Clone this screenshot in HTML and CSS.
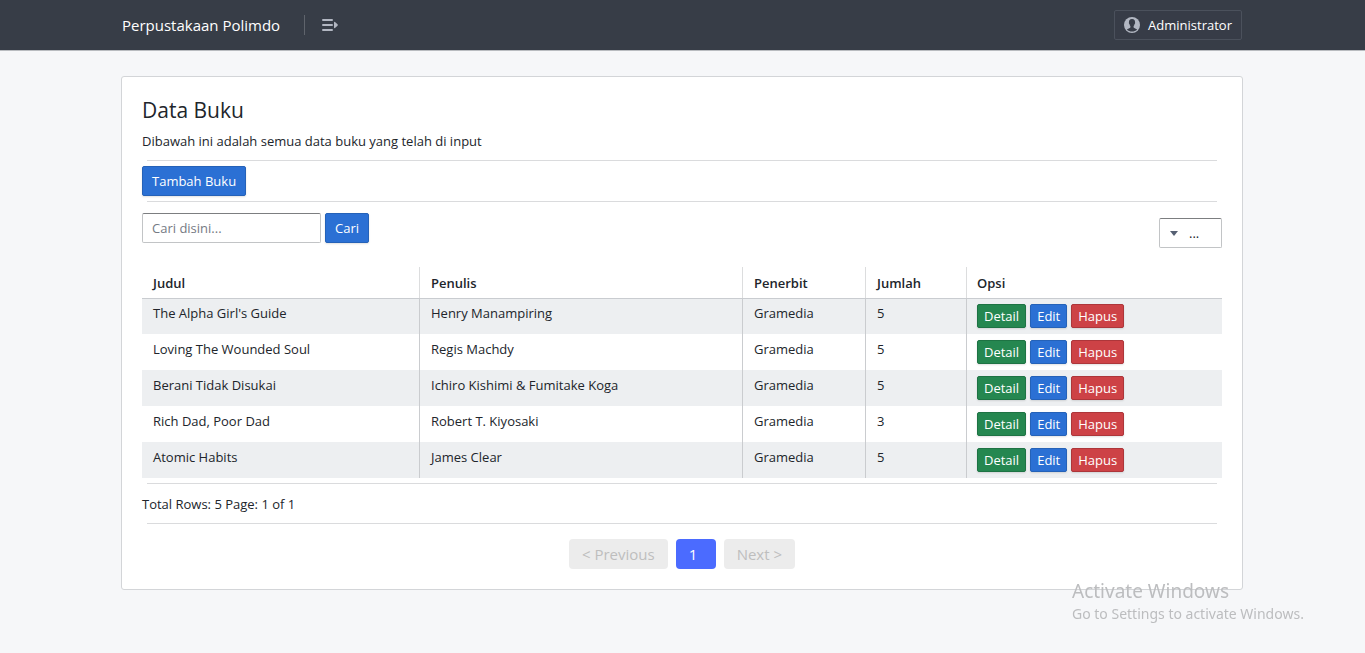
FILE: index.html
```html
<!DOCTYPE html>
<html lang="id">
<head>
<meta charset="utf-8">
<title>Perpustakaan Polimdo</title>
<link rel="stylesheet" href="styles.css">
</head>
<body>
<header class="navbar">
  <a class="brand" href="#">Perpustakaan Polimdo</a>
  <span class="divider"></span>
  <button class="menu-toggle" type="button" aria-label="Menu">
    <svg width="18" height="14" viewBox="0 0 18 14" fill="#b2b7c2"><rect x="1" y="1" width="11" height="2" rx="1"/><rect x="1" y="6" width="11" height="2" rx="1"/><rect x="1" y="11" width="11" height="2" rx="1"/><path d="M13 4.500Q13 3.500 14 4L16.500 6.300Q17.300 7 16.500 7.700L14 10Q13 10.500 13 9.500z"/></svg>
  </button>
  <button class="user" type="button">
    <svg width="16" height="16" viewBox="0 0 16 16"><circle cx="8" cy="8" r="8" fill="#b2b7c2"/><path d="M8 2C5.700 2 4.800 3.500 5 5.300C4.700 5.700 4.900 6.800 5.500 7.200C5.700 8.200 6.100 8.700 6.400 9.100V10.500C5.700 11.400 3.900 11.600 2.900 12.500C5.400 15.200 10.600 15.200 13.100 12.500C12.100 11.600 10.300 11.400 9.600 10.500V9.100C9.900 8.700 10.300 8.200 10.500 7.200C11.100 6.800 11.300 5.700 11 5.300C11.200 3.500 10.300 2 8 2Z" fill="#373c47"/></svg>
    Administrator
  </button>
</header>
<main class="page">
  <section class="card">
    <h1 class="title">Data Buku</h1>
    <p class="text">Dibawah ini adalah semua data buku yang telah di input</p>
    <hr class="rule rule-top">
    <a class="btn btn-blue" href="#">Tambah Buku</a>
    <hr class="rule">
    <div class="toolbar">
      <form class="search">
        <input class="field" type="text" placeholder="Cari disini..." aria-label="Cari buku">
        <button class="btn btn-blue" type="button">Cari</button>
      </form>
      <div class="picker">
        <svg class="caret" width="8" height="5" viewBox="0 0 8 5"><path d="M0 0h8L4 5z" fill="#566073"/></svg>
        <select class="select" aria-label="Kategori"><option>...</option></select>
      </div>
    </div>
    <table class="table">
      <colgroup><col class="col-judul"><col class="col-penulis"><col class="col-penerbit"><col class="col-jumlah"><col></colgroup>
      <thead><tr><th>Judul</th><th>Penulis</th><th>Penerbit</th><th>Jumlah</th><th>Opsi</th></tr></thead>
      <tbody>
        <tr><td>The Alpha Girl's Guide</td><td>Henry Manampiring</td><td>Gramedia</td><td>5</td><td><div class="actions"><a class="act green" href="#">Detail</a><a class="act blue" href="#">Edit</a><a class="act red" href="#">Hapus</a></div></td></tr>
        <tr><td>Loving The Wounded Soul</td><td>Regis Machdy</td><td>Gramedia</td><td>5</td><td><div class="actions"><a class="act green" href="#">Detail</a><a class="act blue" href="#">Edit</a><a class="act red" href="#">Hapus</a></div></td></tr>
        <tr><td>Berani Tidak Disukai</td><td>Ichiro Kishimi &amp; Fumitake Koga</td><td>Gramedia</td><td>5</td><td><div class="actions"><a class="act green" href="#">Detail</a><a class="act blue" href="#">Edit</a><a class="act red" href="#">Hapus</a></div></td></tr>
        <tr><td>Rich Dad, Poor Dad</td><td>Robert T. Kiyosaki</td><td>Gramedia</td><td>3</td><td><div class="actions"><a class="act green" href="#">Detail</a><a class="act blue" href="#">Edit</a><a class="act red" href="#">Hapus</a></div></td></tr>
        <tr><td>Atomic Habits</td><td>James Clear</td><td>Gramedia</td><td>5</td><td><div class="actions"><a class="act green" href="#">Detail</a><a class="act blue" href="#">Edit</a><a class="act red" href="#">Hapus</a></div></td></tr>
      </tbody>
    </table>
    <hr class="rule">
    <p class="text total">Total Rows: 5 Page: 1 of 1</p>
    <hr class="rule">
    <nav class="pager" aria-label="Halaman">
      <button class="page-btn" type="button" disabled>&lt; Previous</button>
      <button class="page-btn current" type="button">1</button>
      <button class="page-btn" type="button" disabled>Next &gt;</button>
    </nav>
  </section>
</main>
<aside class="watermark">
  <p class="watermark-title">Activate Windows</p>
  <p class="watermark-text">Go to Settings to activate Windows.</p>
</aside>
</body>
</html>
```
FILE: styles.css
```css
* { box-sizing: border-box; }
body {
  margin: 0;
  background: #f6f7f9;
  color: #21252b;
  font: 13px/20px "Open Sans", "Noto Sans", sans-serif;
}
button, input, select { font: inherit; margin: 0; }
a { text-decoration: none; }
.navbar {
  display: flex;
  align-items: center;
  min-height: 51px;
  padding: 0 123px 0 122px;
  background: #373d47;
  border-bottom: 1px solid #b9bcc0;
}
.brand { color: #fff; font-size: 15px; }
.divider { width: 1px; height: 20px; margin: 0 16px 0 24px; background: #5f646c; }
.menu-toggle { display: flex; padding: 0; border: 0; background: none; }
.user {
  display: flex;
  align-items: center;
  gap: 8px;
  height: 30px;
  margin-left: auto;
  padding: 0 9px;
  color: #fff;
  background: #373c47;
  border: 1px solid #4b515c;
  border-radius: 2px;
}
.page { padding: 25px 122px 24px 121px; }
.card {
  padding: 21px 20px 20px;
  background: #fff;
  border: 1px solid #d3d5d8;
  border-radius: 3px;
}
.title { margin: 0 0 9px; font-size: 21px; line-height: 24px; font-weight: 500; }
.text { margin: 0; }
.rule { height: 1px; margin: 5px; border: 0; background: #dadbdd; }
.rule-top { margin-top: 9px; }
.btn {
  display: inline-flex;
  align-items: center;
  height: 30px;
  padding: 0 9px;
  border: 1px solid #2562b8;
  border-radius: 2px;
  color: #fff;
  box-shadow: 0 1px 2px #0000001f;
}
.btn-blue { background: #2b70d4; }
.toolbar { display: flex; justify-content: space-between; padding-top: 6px; }
.search { display: flex; gap: 4px; }
.field, .select {
  height: 30px;
  background: #fff;
  border: 1px solid #c2c4c6;
  border-top-color: #7c7e80;
  border-radius: 2px;
  color: #21252b;
}
.field { width: 179px; padding: 0 9px; }
.field::placeholder { color: #757a84; opacity: 1; }
.picker { position: relative; margin-top: 5px; }
.select { display: block; width: 63px; padding: 0 0 0 29px; appearance: none; }
.caret { position: absolute; left: 11px; top: 13px; }
.table { width: 100%; margin-top: 19px; border-collapse: separate; border-spacing: 0; table-layout: fixed; }
.col-judul { width: 278px; }
.col-penulis { width: 323px; }
.col-penerbit { width: 123px; }
.col-jumlah { width: 101px; }
.table th, .table td {
  padding: 5px 10px 0 11px;
  text-align: left;
  vertical-align: top;
  border-right: 1px solid #cacccf;
}
.table th:last-child, .table td:last-child { padding-left: 10px; border-right: 0; }
.table th { height: 31px; padding-top: 6px; font-weight: 600; border-right-color: #dcddde; }
.table td { height: 36px; }
.table tbody tr:first-child td { box-shadow: inset 0 1px #c9ccd0; }
.table tbody tr:nth-child(odd) { background: #edeff1; }
.actions { display: flex; gap: 4px; padding-top: 1px; }
.act {
  height: 24px;
  padding: 0 6px;
  line-height: 22px;
  color: #fff;
  border: 1px solid;
  border-radius: 2px;
  box-shadow: 0 1px 2px #0000001f;
}
.green { background: #258750; border-color: #1e7344; }
.blue { background: #2b70d4; border-color: #2562b8; }
.red { background: #cd4246; border-color: #ad363a; }
.total { padding: 5px 0 4px; }
.pager { display: flex; justify-content: center; gap: 8px; padding-top: 10px; }
.page-btn {
  height: 30px;
  padding: 0 13px;
  border: 0;
  border-radius: 4px;
  background: #ececec;
  color: #bebebe;
  font-size: 15px;
}
.current { width: 40px; background: #4b6bff; color: #fff; text-align: left; }
.watermark {
  position: fixed;
  right: 57px;
  bottom: 29px;
  width: 236px;
  color: #bcbdbf;
  font-family: "Noto Sans", sans-serif;
  pointer-events: none;
}
.watermark p { margin: 0; }
.watermark-title { font-size: 19px; line-height: 26px; }
.watermark-text { font-size: 14px; }
```
